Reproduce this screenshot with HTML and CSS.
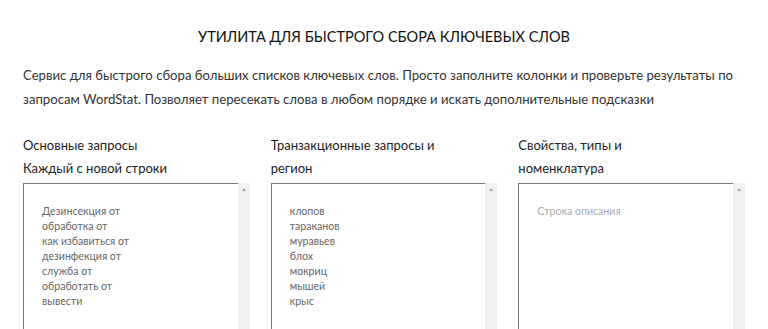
FILE: index.html
```
<!DOCTYPE html>
<html lang="ru">
<head>
    <meta charset="UTF-8">
    <meta name="viewport" content="width=device-width, initial-scale=1.0">
    <title>Утилита для быстрого сбора ключевых слов</title>
    <link rel="stylesheet" href="styles.css">
</head>
<body>

    <div class="page">
        <h1>Утилита для быстрого сбора ключевых слов</h1>
        <p class="intro">Сервис для быстрого сбора больших списков ключевых слов. Просто заполните колонки и проверьте результаты по запросам WordStat. Позволяет пересекать слова в любом порядке и искать дополнительные подсказки</p>

        <div class="columns">
            <div class="column">
                <label for="main">Основные запросы<br>Каждый с новой строки</label>
                <div class="field">
                    <textarea id="main">Дезинсекция от
обработка от
как избавиться от
дезинфекция от
служба от
обработать от
вывести</textarea>
                    <div class="scrollbar"><span class="arrow"></span></div>
                </div>
            </div>

            <div class="column">
                <label for="trans">Транзакционные запросы и регион</label>
                <div class="field">
                    <textarea id="trans">клопов
тараканов
муравьев
блох
мокриц
мышей
крыс</textarea>
                    <div class="scrollbar"><span class="arrow"></span></div>
                </div>
            </div>

            <div class="column">
                <label for="props">Свойства, типы и номенклатура</label>
                <div class="field">
                    <textarea id="props" placeholder="Строка описания"></textarea>
                    <div class="scrollbar"><span class="arrow"></span></div>
                </div>
            </div>
        </div>
    </div>

</body>
</html>
```

FILE: styles.css
```
body {
    font-family: 'Lato', 'Open Sans', sans-serif;
    background: #fff;
    color: #222;
    margin: 0;
    padding: 0;
}
.page {
    padding: 0 23px;
}
h1 {
    font-size: 14.5px;
    font-weight: normal;
    text-transform: uppercase;
    text-align: center;
    color: #111;
    margin: 0;
    padding-top: 28px;
    line-height: 18px;
}
.intro {
    font-size: 13.15px;
    line-height: 24px;
    color: #333;
    margin: 17px 0 0;
}
.columns {
    display: grid;
    grid-template-columns: repeat(3, 1fr);
    column-gap: 21px;
    margin-top: 23px;
}
label {
    display: block;
    font-size: 13px;
    line-height: 23px;
    color: #222;
    height: 46px;
    padding-right: 40px;
}
.field {
    display: flex;
    margin-top: 3px;
}
textarea {
    flex: 1;
    height: 200px;
    resize: none;
    overflow: hidden;
    border: none;
    border-top: 1px solid #777;
    border-left: 1px solid #777;
    padding: 20px 18px;
    font-family: 'Lato', 'Open Sans', sans-serif;
    font-size: 10.6px;
    line-height: 15px;
    color: #666;
    outline: none;
}
textarea::placeholder {
    color: #aaa;
}
/* fake scrollbar on the right of each box */
.scrollbar {
    width: 12px;
    background: #f1f1f1;
    position: relative;
}
.arrow {
    position: absolute;
    top: 5px;
    left: 4px;
    border-left: 2px solid transparent;
    border-right: 2px solid transparent;
    border-bottom: 3px solid #a3a3a3;
}
```
